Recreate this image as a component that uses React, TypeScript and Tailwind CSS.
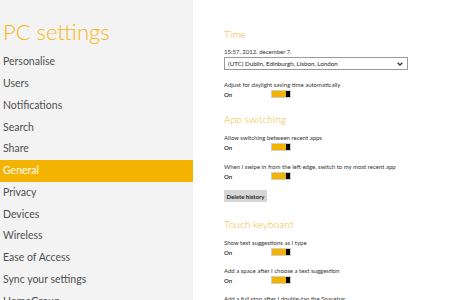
import React from "react";

const nav = [
  "Personalise",
  "Users",
  "Notifications",
  "Search",
  "Share",
  "General",
  "Privacy",
  "Devices",
  "Wireless",
  "Ease of Access",
  "Sync your settings",
  "HomeGroup",
];

function Toggle() {
  return (
    <div className="flex h-[8px] w-[20px] border border-[#cfcfcf] bg-white">
      <div className="flex-1 bg-[#f4b300]" />
      <div className="w-[4px] bg-black" />
    </div>
  );
}

function Setting({ label }: { label: string }) {
  return (
    <div className="flex flex-col">
      <div className="h-[10px] flex items-center whitespace-nowrap text-[6px] text-[#333]">{label}</div>
      <div className="flex items-center h-[10px]">
        <span className="w-[47px] text-[6px] font-semibold text-[#222]">On</span>
        <Toggle />
      </div>
    </div>
  );
}

function Heading({ children }: { children: React.ReactNode }) {
  return (
    <div className="h-[12px] flex items-center text-[10.2px] font-light text-[#f0b92f] whitespace-nowrap">
      {children}
    </div>
  );
}

export default function App() {
  return (
    <div
      className="flex w-[450px] h-[300px] overflow-hidden bg-white"
      style={{ fontFamily: 'Lato, "Open Sans", sans-serif' }}
    >
      <aside className="w-[193px] shrink-0 bg-[#f3f3f3] flex flex-col">
        <div className="h-[51.1px] shrink-0 pl-[3px] pt-[21px] text-[22px] leading-[22px] font-light text-[#f5b915] whitespace-nowrap">
          PC settings
        </div>
        {nav.map((n) => (
          <div
            key={n}
            className={
              n === "General"
                ? "h-[21.8px] shrink-0 flex items-center pl-[3px] text-[10.5px] text-white bg-[#f4b300]"
                : "h-[21.8px] shrink-0 flex items-center pl-[3px] text-[10.5px] text-[#505050]"
            }
          >
            {n}
          </div>
        ))}
      </aside>
      <main className="flex-1 pl-[31px] pt-[29px] flex flex-col">
        <Heading>Time</Heading>
        <div className="mt-[6px] h-[10px] flex items-center text-[6px] text-[#333]">15:57, 2012. december 7.</div>
        <div className="mt-[1px] w-[184px] h-[13px] shrink-0 border border-[#9a9a9a] flex items-center justify-between pl-[3px] pr-[4px]">
          <span className="text-[6.2px] text-[#222] whitespace-nowrap">(UTC) Dublin, Edinburgh, Lisbon, London</span>
          <svg width="6" height="4" viewBox="0 0 6 4">
            <path d="M0.7 0.7 L3 3 L5.3 0.7" stroke="#333" strokeWidth="1.3" fill="none" />
          </svg>
        </div>
        <div className="mt-[9px]">
          <Setting label="Adjust for daylight saving time automatically" />
        </div>
        <div className="mt-[15px]">
          <Heading>App switching</Heading>
        </div>
        <div className="mt-[6px]">
          <Setting label="Allow switching between recent apps" />
        </div>
        <div className="mt-[9px]">
          <Setting label="When I swipe in from the left edge, switch to my most recent app" />
        </div>
        <div className="mt-[9px]">
          <div className="w-[43px] h-[12px] bg-[#d6d6d6] flex items-center justify-center whitespace-nowrap text-[6px] font-bold text-[#222]">
            Delete history
          </div>
        </div>
        <div className="mt-[17px]">
          <Heading>Touch keyboard</Heading>
        </div>
        <div className="mt-[6px]">
          <Setting label="Show text suggestions as I type" />
        </div>
        <div className="mt-[8px]">
          <Setting label="Add a space after I choose a text suggestion" />
        </div>
        <div className="mt-[8px]">
          <Setting label="Add a full stop after I double-tap the Spacebar" />
        </div>
      </main>
    </div>
  );
}
